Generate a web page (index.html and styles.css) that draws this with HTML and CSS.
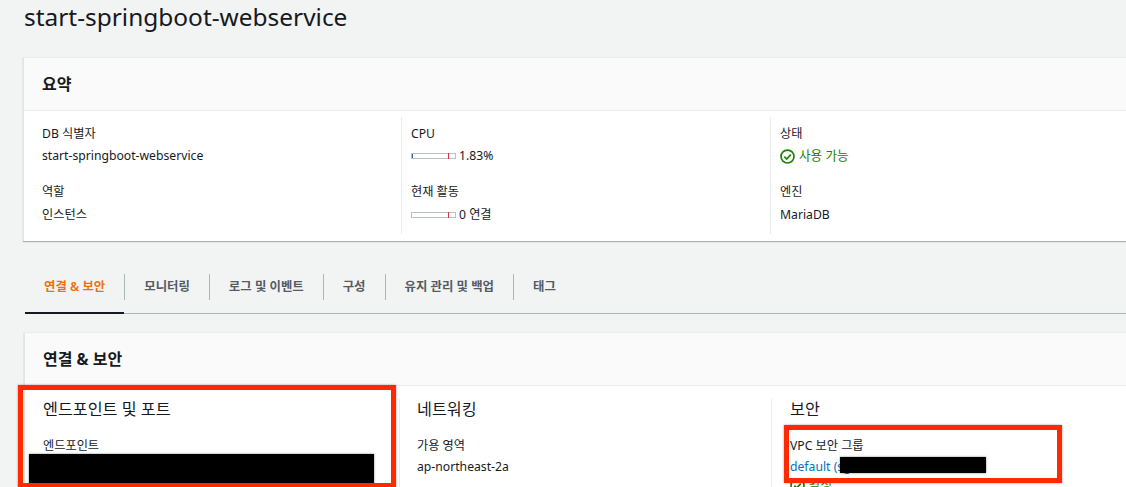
FILE: index.html
```html
<!DOCTYPE html>
<html lang="ko">
<head>
<meta charset="utf-8">
<title>start-springboot-webservice</title>
<link rel="stylesheet" href="styles.css">
</head>
<body>
<main class="page">
  <h1 class="title">start-springboot-webservice</h1>

  <section class="card summary">
    <h2 class="card-head">요약</h2>
    <div class="columns summary-cols">
      <div class="col">
        <div class="field"><div class="label">DB 식별자</div><div class="value">start-springboot-webservice</div></div>
        <div class="field"><div class="label">역할</div><div class="value">인스턴스</div></div>
      </div>
      <div class="col">
        <div class="field"><div class="label">CPU</div>
          <div class="value meter-row"><span class="meter"><span class="meter-fill"></span><span class="meter-mark"></span></span>1.83%</div></div>
        <div class="field"><div class="label">현재 활동</div>
          <div class="value meter-row"><span class="meter"><span class="meter-mark"></span></span>0 연결</div></div>
      </div>
      <div class="col">
        <div class="field"><div class="label">상태</div>
          <div class="value status">
            <svg class="check" viewBox="0 0 16 16" aria-hidden="true"><circle cx="8" cy="8" r="6.9"/><path d="M4.6 8.2l2.5 2.5 4.4-4.7"/></svg>사용 가능</div></div>
        <div class="field"><div class="label">엔진</div><div class="value">MariaDB</div></div>
      </div>
    </div>
  </section>

  <nav class="tabs">
    <a class="tab active">연결 &amp; 보안</a>
    <a class="tab">모니터링</a>
    <a class="tab">로그 및 이벤트</a>
    <a class="tab">구성</a>
    <a class="tab">유지 관리 및 백업</a>
    <a class="tab">태그</a>
  </nav>

  <section class="card detail">
    <h2 class="card-head">연결 &amp; 보안</h2>
    <div class="columns detail-cols">
      <div class="col">
        <h3 class="sub">엔드포인트 및 포트</h3>
        <div class="label">엔드포인트</div>
      </div>
      <div class="col">
        <h3 class="sub">네트워킹</h3>
        <div class="label">가용 영역</div>
        <div class="value">ap-northeast-2a</div>
      </div>
      <div class="col">
        <h3 class="sub">보안</h3>
        <div class="label">VPC 보안 그룹</div>
        <div class="value"><a class="link">default (sg</a></div>
        <div class="value status">
          <svg class="check" viewBox="0 0 16 16" aria-hidden="true"><circle cx="8" cy="8" r="6.9"/><path d="M4.6 8.2l2.5 2.5 4.4-4.7"/></svg>활성</div>
      </div>
    </div>
  </section>
</main>

<div class="redact redact-endpoint"></div>
<div class="redact redact-group"></div>
<div class="callout callout-endpoint"></div>
<div class="callout callout-group"></div>
</body>
</html>
```
FILE: styles.css
```css
* { box-sizing: border-box; }
html, body { margin: 0; height: 487px; overflow: hidden; }
body {
  position: relative;
  background: #f2f3f3;
  color: #16191f;
  font-family: "Noto Sans", "Noto Sans CJK KR", sans-serif;
  font-size: 12.2px;
}
.page { width: 1160px; padding: 0 0 0 24px; }
.title {
  margin: 0;
  height: 57px;
  font-size: 24.45px;
  line-height: 33px;
  font-weight: 400;
}
.card {
  background: #fff;
  border-left: 1px solid #e4e6e6;
  border-top: 1px solid #eaeded;
  box-shadow: 0 1px 1px 0 rgba(0, 28, 36, .3);
}
.summary { margin-left: -1px; height: 184px; }
.card-head {
  margin: 0;
  height: 53px;
  padding: 0 18px;
  background: #fafafa;
  border-bottom: 1px solid #eaeded;
  font-size: 16px;
  line-height: 52px;
  font-weight: 700;
}
.columns { display: grid; }
.summary-cols { grid-template-columns: 377px 369px 369px; padding-top: 6px; }
.col { padding: 0 9px; border-left: 1px solid #eaeded; }
.col:first-child { border-left: 0; padding-left: 18px; }
.summary-cols .col { height: 117px; }
.field { height: 58px; padding-top: 8px; }
.label { line-height: 18px; height: 22px; }
.value { line-height: 18px; }
.field + .field .value { margin-top: 1px; }
.meter-row { display: flex; align-items: center; }
.meter {
  position: relative;
  display: block;
  flex: none;
  width: 45px;
  height: 6px;
  margin-right: 3px;
  background: #fff;
  border: 1px solid #b9c2c3;
}
.meter-fill { position: absolute; left: 0; top: 0; bottom: 0; width: 1px; background: #2f5f7a; }
.meter-mark { position: absolute; left: 36px; top: -1px; bottom: -1px; width: 1px; background: #d9324a; }
.status { display: flex; align-items: center; font-size: 12.6px; color: #1d8102; }
.check {
  flex: none;
  width: 15px;
  height: 15px;
  margin-right: 4px;
  fill: none;
  stroke: #1d8102;
  stroke-width: 1.8;
}
.tabs {
  position: relative;
  display: flex;
  align-items: center;
  height: 53px;
  margin: 20px 0 0 1px;
  border-bottom: 1px solid #aab7b8;
}
.tab {
  position: relative;
  display: block;
  padding: 0 19px;
  font-size: 12.4px;
  font-weight: 600;
  color: #545b64;
  line-height: 26px;
  border-left: 1px solid #aab7b8;
}
.tab:first-child { border-left: 0; }
.tab.active { color: #ec7211; }
.tab.active::after {
  content: "";
  position: absolute;
  left: 0;
  right: 0;
  bottom: -14px;
  height: 2px;
  background: #16191f;
}
.detail { margin-top: 18px; }
.detail-cols { grid-template-columns: 374px 372px 369px; padding-top: 13px; }
.detail-cols .col { height: 92px; padding-left: 17px; padding-right: 10px; }
.detail-cols .col:first-child { padding-left: 18px; }
.detail-cols .col:last-child { padding-left: 18px; }
.sub {
  margin: 0 0 18px;
  font-size: 16.2px;
  line-height: 20px;
  font-weight: 400;
}
.detail-cols .label { height: 21px; }
.link { color: #0073bb; }
.redact { position: absolute; background: #000; box-shadow: 0 0 2px rgba(0, 0, 0, .5); }
.redact-endpoint { left: 29px; top: 454px; width: 345px; height: 33px; }
.redact-group { left: 840px; top: 457px; width: 146px; height: 16px; }
.callout { position: absolute; border: 5px solid #ff2a00; box-shadow: 0 0 2px rgba(0, 0, 0, .4); }
.callout-endpoint { left: 18px; top: 385px; width: 378px; height: 103px; }
.callout-group { left: 784px; top: 425px; width: 278px; height: 58px; }
```
